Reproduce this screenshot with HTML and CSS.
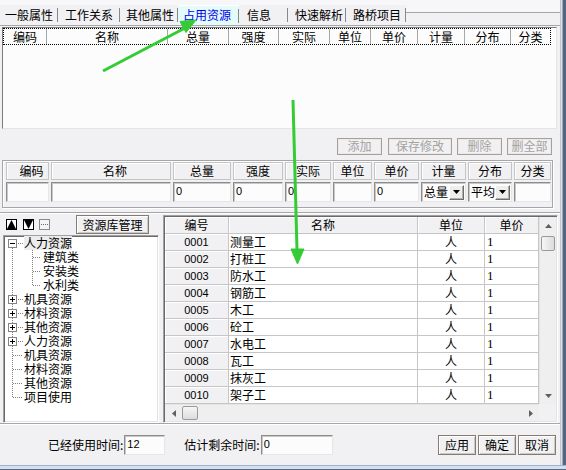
FILE: index.html
```html
<!DOCTYPE html>
<html lang="zh-CN">
<head>
<meta charset="utf-8">
<title>占用资源</title>
<link rel="stylesheet" href="styles.css">
</head>
<body>
<div class="win">
  <div class="main">
    <div class="client">
      <div class="tabs">
        <div class="tab w1">一般属性</div>
        <div class="tab w2">工作关系</div>
        <div class="tab w3">其他属性</div>
        <div class="tab w4 sel">占用资源</div>
        <div class="tab w5">信息</div>
        <div class="tab w6">快速解析</div>
        <div class="tab w7">路桥项目</div>
        <div class="tab-rest"></div>
      </div>
      <div class="page">
        <div class="list">
          <div class="lvh">
            <div class="lh h1">编码</div>
            <div class="lh h2">名称</div>
            <div class="lh h3">总量</div>
            <div class="lh h4">强度</div>
            <div class="lh h5">实际</div>
            <div class="lh h6">单位</div>
            <div class="lh h7">单价</div>
            <div class="lh h8">计量</div>
            <div class="lh h9">分布</div>
            <div class="lh h10">分类</div>
          </div>
        </div>
        <div class="btns">
          <div class="dbtn b45">添加</div>
          <div class="dbtn b64 gap6">保存修改</div>
          <div class="dbtn b45">删除</div>
          <div class="dbtn b45">删全部</div>
        </div>
        <div class="group">
          <div class="frow">
            <div class="fh sh">编码</div>
            <div class="fh sh">名称</div>
            <div class="fh">总量</div>
            <div class="fh">强度</div>
            <div class="fh">实际</div>
            <div class="fh">单位</div>
            <div class="fh">单价</div>
            <div class="fh">计量</div>
            <div class="fh">分布</div>
            <div class="fh">分类</div>
          </div>
          <div class="frow">
            <div class="fi"></div>
            <div class="fi"></div>
            <div class="fi">0</div>
            <div class="fi">0</div>
            <div class="fi">0</div>
            <div class="fi"></div>
            <div class="fi">0</div>
            <div class="fi fd"><span class="fdt">总量</span><span class="ddb"><svg width="7" height="4" viewBox="0 0 7 4"><polygon points="0,0 7,0 3.5,4" fill="#000"/></svg></span></div>
            <div class="fi fd"><span class="fdt">平均</span><span class="ddb"><svg width="7" height="4" viewBox="0 0 7 4"><polygon points="0,0 7,0 3.5,4" fill="#000"/></svg></span></div>
            <div class="fi"></div>
          </div>
        </div>
      </div>
      <div class="lower">
        <div class="left">
          <div class="ltool">
            <svg class="ico i1" width="11" height="11" viewBox="0 0 11 11"><rect x="0.5" y="0.5" width="10" height="10" fill="#fff" stroke="#000"/><polygon points="5.5,1 10,10 1,10" fill="#000"/></svg>
            <svg class="ico i2" width="11" height="11" viewBox="0 0 11 11"><rect x="0.5" y="0.5" width="10" height="10" fill="#fff" stroke="#000"/><polygon points="1,1 10,1 5.5,10" fill="#000"/></svg>
            <svg class="ico i3" width="11" height="11" viewBox="0 0 11 11"><rect x="0.5" y="0.5" width="10" height="10" fill="#f4f4f4" stroke="#8a8a8a"/><line x1="2" y1="5.5" x2="10" y2="5.5" stroke="#6a6a6a" stroke-dasharray="1 1"/></svg>
            <div class="rbtn">资源库管理</div>
          </div>
          <div class="tree">
            <div class="ti t-rootfirst"><svg class="ebox" width="9" height="9" viewBox="0 0 9 9"><rect x="0.5" y="0.5" width="8" height="8" fill="#fff" stroke="#848484"/><line x1="2" y1="4.5" x2="7" y2="4.5" stroke="#000"/></svg><span class="tx hl">人力资源</span></div>
            <div class="ti t-child"><span class="tx">建筑类</span></div>
            <div class="ti t-child"><span class="tx">安装类</span></div>
            <div class="ti t-childlast"><span class="tx">水利类</span></div>
            <div class="ti t-rootbox"><svg class="ebox" width="9" height="9" viewBox="0 0 9 9"><rect x="0.5" y="0.5" width="8" height="8" fill="#fff" stroke="#848484"/><line x1="2" y1="4.5" x2="7" y2="4.5" stroke="#000"/><line x1="4.5" y1="2" x2="4.5" y2="7" stroke="#000"/></svg><span class="tx">机具资源</span></div>
            <div class="ti t-rootbox"><svg class="ebox" width="9" height="9" viewBox="0 0 9 9"><rect x="0.5" y="0.5" width="8" height="8" fill="#fff" stroke="#848484"/><line x1="2" y1="4.5" x2="7" y2="4.5" stroke="#000"/><line x1="4.5" y1="2" x2="4.5" y2="7" stroke="#000"/></svg><span class="tx">材料资源</span></div>
            <div class="ti t-rootbox"><svg class="ebox" width="9" height="9" viewBox="0 0 9 9"><rect x="0.5" y="0.5" width="8" height="8" fill="#fff" stroke="#848484"/><line x1="2" y1="4.5" x2="7" y2="4.5" stroke="#000"/><line x1="4.5" y1="2" x2="4.5" y2="7" stroke="#000"/></svg><span class="tx">其他资源</span></div>
            <div class="ti t-rootbox"><svg class="ebox" width="9" height="9" viewBox="0 0 9 9"><rect x="0.5" y="0.5" width="8" height="8" fill="#fff" stroke="#848484"/><line x1="2" y1="4.5" x2="7" y2="4.5" stroke="#000"/><line x1="4.5" y1="2" x2="4.5" y2="7" stroke="#000"/></svg><span class="tx">人力资源</span></div>
            <div class="ti t-root"><span class="tx">机具资源</span></div>
            <div class="ti t-root"><span class="tx">材料资源</span></div>
            <div class="ti t-root"><span class="tx">其他资源</span></div>
            <div class="ti t-rootlast"><span class="tx">项目使用</span></div>
          </div>
        </div>
        <div class="grid">
          <div class="gmain">
            <div class="gt">
              <div class="gc fx">编号</div><div class="gc fx">名称</div><div class="gc fx">单位</div><div class="gc fx">单价</div>
              <div class="gc fx num">0001</div><div class="gc nm">测量工</div><div class="gc ct">人</div><div class="gc pr">1</div>
              <div class="gc fx num">0002</div><div class="gc nm">打桩工</div><div class="gc ct">人</div><div class="gc pr">1</div>
              <div class="gc fx num">0003</div><div class="gc nm">防水工</div><div class="gc ct">人</div><div class="gc pr">1</div>
              <div class="gc fx num">0004</div><div class="gc nm">钢筋工</div><div class="gc ct">人</div><div class="gc pr">1</div>
              <div class="gc fx num">0005</div><div class="gc nm">木工</div><div class="gc ct">人</div><div class="gc pr">1</div>
              <div class="gc fx num">0006</div><div class="gc nm">砼工</div><div class="gc ct">人</div><div class="gc pr">1</div>
              <div class="gc fx num">0007</div><div class="gc nm">水电工</div><div class="gc ct">人</div><div class="gc pr">1</div>
              <div class="gc fx num">0008</div><div class="gc nm">瓦工</div><div class="gc ct">人</div><div class="gc pr">1</div>
              <div class="gc fx num">0009</div><div class="gc nm">抹灰工</div><div class="gc ct">人</div><div class="gc pr">1</div>
              <div class="gc fx num">0010</div><div class="gc nm">架子工</div><div class="gc ct">人</div><div class="gc pr">1</div>
            </div>
            <div class="vs">
              <div class="sarr"><svg width="7" height="4" viewBox="0 0 7 4"><polygon points="3.5,0 7,4 0,4" fill="#606060"/></svg></div>
              <div class="vtrack"><div class="vthumb"></div></div>
              <div class="sarr"><svg width="7" height="4" viewBox="0 0 7 4"><polygon points="0,0 7,0 3.5,4" fill="#606060"/></svg></div>
            </div>
          </div>
          <div class="hs">
            <div class="htrack">
              <div class="harr"><svg width="4" height="7" viewBox="0 0 4 7"><polygon points="4,0 4,7 0,3.5" fill="#606060"/></svg></div>
              <div class="hthumb"></div>
              <div class="hfill"></div>
              <div class="harr"><svg width="4" height="7" viewBox="0 0 4 7"><polygon points="0,0 0,7 4,3.5" fill="#606060"/></svg></div>
            </div>
            <div class="corner"></div>
          </div>
        </div>
      </div>
      <div class="bottom">
        <span class="lbl">已经使用时间:</span>
        <div class="bi bi1">12</div>
        <span class="lbl lbl2">估计剩余时间:</span>
        <div class="bi bi2">0</div>
        <div class="pbtn first">应用</div>
        <div class="pbtn">确定</div>
        <div class="pbtn">取消</div>
      </div>
    </div>
    <div class="frame-r"></div>
  </div>
  <div class="frame-b"></div>
  <svg class="ov" width="566" height="470" viewBox="0 0 566 470">
    <g fill="#34cc34" stroke="#34cc34">
      <line x1="103" y1="71" x2="185" y2="28" stroke-width="3"/>
      <polygon points="196,20 186,32.5 180,21.5" stroke-width="1"/>
      <line x1="293" y1="100" x2="297" y2="250" stroke-width="3"/>
      <polygon points="291,249 304,249 297.5,264" stroke-width="1"/>
    </g>
  </svg>
</div>
</body>
</html>
```
FILE: styles.css
```css
* { box-sizing: border-box; margin: 0; padding: 0; }
html, body { width: 566px; height: 470px; overflow: hidden; }
body {
  background: #f1f0f2;
  font-family: "Noto Sans CJK SC", "Noto Sans CJK JP", sans-serif;
  font-size: 12px;
  line-height: 14px;
  color: #000;
}
.win { position: relative; width: 566px; height: 470px; display: flex; flex-direction: column; }
.main { display: flex; height: 465px; }
.client {
  width: 561px; height: 465px;
  border-right: 1px solid #c6c6ca;
  display: flex; flex-direction: column;
  background: #f1f0f2;
}
.frame-r { width: 5px; background: linear-gradient(to right, #dde4ee 0 1px, #9aa8bc 1px 2px, #56667f 2px 5px); }
.frame-b { height: 5px; background: linear-gradient(to bottom, #9fb0c8 0 1px, #d3e0ef 1px 4px, #5a6a86 4px 5px); }

/* tabs */
.tabs { height: 25px; display: flex; padding-top: 5px; background: #f7f6f8; }
.tab {
  height: 20px; line-height: 19px; padding-left: 5px; white-space: nowrap;
  background: #f1f0f2 linear-gradient(#888, #888) no-repeat right 3px / 1px 14px;
}
.w1 { width: 58px; }
.w2 { width: 62px; padding-left: 7px; }
.w3 { width: 58px; padding-left: 6px; }
.w4 { width: 61px; }
.w5 { width: 49px; padding-left: 8px; }
.w6 { width: 58px; padding-left: 7px; }
.w7 { width: 60px; padding-left: 7px; }
.tab.sel {
  color: #0000ee;
  background: #e3fbfb linear-gradient(#888, #888) no-repeat right 3px / 1px 14px;
  border-top: 1px solid #fff;
  line-height: 18px;
}
.tab-rest { flex: 1; margin-top: 7px; height: 13px; border-top: 1px solid #a6a6aa; background: #f1f0f2; }

/* page */
.page { height: 187px; border-top: 1px solid #a6a6aa; padding: 1px 0 0 2px; }
.list {
  width: 555px; height: 102px; background: #fcfcfc;
  border-top: 1px solid #7c7c7c; border-left: 1px solid #7c7c7c;
  border-right: 1px solid #e4e4e4; border-bottom: 1px solid #e4e4e4;
}
.lvh { display: flex; width: 548px; height: 17px; border: 1px dotted #000; }
.lh { border-right: 1px solid #a8a8a8; text-align: center; line-height: 15px; white-space: nowrap; }
.lh:last-child { border-right: 0; }
.h1 { width: 43px; } .h2 { width: 121px; } .h3 { width: 61px; } .h4 { width: 50px; } .h5 { width: 51px; }
.h6 { width: 41px; } .h7 { width: 47px; } .h8 { width: 47px; } .h9 { width: 46px; } .h10 { width: 39px; }

.btns { display: flex; justify-content: flex-end; gap: 5px; margin-top: 9px; padding-right: 8px; height: 17px; }
.dbtn {
  height: 17px; border: 1px solid #a89f97; box-shadow: inset 0 0 0 1px #ebe8e6;
  color: #a3a3a3; text-align: center; line-height: 14px; white-space: nowrap;
}
.b45 { width: 45px; }
.b64 { width: 64px; }
.gap6 { margin-left: 1px; }

.group {
  margin-top: 5px; width: 551px; height: 48px;
  border: 1px solid #a6a6aa; box-shadow: inset 1px 1px 0 #fff, 1px 1px 0 #fff;
  padding: 1px 0 0 3px;
}
.frow { display: grid; grid-template-columns: 43px 120px 58px 50px 46px 39px 45px 45px 44px 37px; column-gap: 2px; }
.fh {
  height: 18px; border: 1px solid #c4c4c4; box-shadow: inset 1px 1px 0 #fff;
  text-align: center; line-height: 16px; white-space: nowrap;
}
.fh.sh { padding-left: 8px; }
.fi {
  height: 20px; margin-top: 2px; background: #fcfcfc;
  border: 1px solid; border-color: #8c8c8c #e6e6e6 #e6e6e6 #8c8c8c;
  box-shadow: inset 1px 1px 0 #c8c8c8;
  font-family: "Liberation Sans", Arial, sans-serif; font-size: 11px; line-height: 17px; padding-left: 2px;
}
.fd { display: flex; align-items: center; padding-right: 1px; font-family: "Noto Sans CJK SC", sans-serif; font-size: 12px; }
.fdt { flex: 1; line-height: 16px; white-space: nowrap; }
.ddb {
  width: 15px; height: 15px; display: flex; align-items: center; justify-content: center;
  background: #efeeed; border: 1px solid; border-color: #fff #6e6e6e #6e6e6e #fff;
  box-shadow: inset -1px -1px 0 #b0b0b0;
}

/* lower */
.lower {
  height: 211px; border-top: 1px solid #a6a6aa; box-shadow: inset 0 1px 0 #fff;
  display: flex; padding: 0 2px 0 3px;
}
.left { width: 156px; display: flex; flex-direction: column; }
.ltool { height: 22px; display: flex; align-items: flex-start; padding-top: 2px; }
.ico { display: block; margin-top: 4px; }
.i1 { margin-left: 3px; }
.i2 { margin-left: 6px; }
.i3 { margin-left: 5px; }
.rbtn {
  margin-left: 26px; width: 73px; height: 19px; text-align: center; line-height: 17px;
  border: 1px solid #857b71; box-shadow: inset 1px 1px 0 #fff, inset -1px -1px 0 #cdc9c5;
  background: #f1f0f2; white-space: nowrap;
}
.tree {
  height: 188px; width: 156px; background: #fff;
  border: 1px solid; border-color: #a0a0a0 #fff #fff #a0a0a0;
  box-shadow: inset 1px 1px 0 #6a6a6a, inset -1px -1px 0 #e3e3e3;
  padding-left: 1px;
}
.ti { height: 14px; display: flex; align-items: center; white-space: nowrap; background-repeat: no-repeat; padding-left: 19px; }
.ti .tx { line-height: 14px; height: 14px; }
.ti .hl { background: #ececec; }
.ebox { display: block; margin-left: -16px; margin-right: 7px; }
.t-rootfirst, .t-rootbox { padding-left: 3px; }
.t-rootfirst .ebox, .t-rootbox .ebox { margin-left: 0; }
.t-rootfirst {
  background-image: repeating-linear-gradient(to right, #808080 0 1px, transparent 1px 2px), repeating-linear-gradient(to bottom, #808080 0 1px, transparent 1px 2px);
  background-position: 13px 7px, 7px 12px;
  background-size: 5px 1px, 1px 2px;
}
.t-rootbox {
  background-image: repeating-linear-gradient(to right, #808080 0 1px, transparent 1px 2px), repeating-linear-gradient(to bottom, #808080 0 1px, transparent 1px 2px);
  background-position: 13px 7px, 7px 0;
  background-size: 5px 1px, 1px 14px;
}
.t-root {
  background-image: repeating-linear-gradient(to right, #808080 0 1px, transparent 1px 2px), repeating-linear-gradient(to bottom, #808080 0 1px, transparent 1px 2px);
  background-position: 8px 7px, 7px 0;
  background-size: 10px 1px, 1px 14px;
}
.t-rootlast {
  background-image: repeating-linear-gradient(to right, #808080 0 1px, transparent 1px 2px), repeating-linear-gradient(to bottom, #808080 0 1px, transparent 1px 2px);
  background-position: 8px 7px, 7px 0;
  background-size: 10px 1px, 1px 8px;
}
.t-child, .t-childlast { padding-left: 38px; }
.t-child {
  background-image: repeating-linear-gradient(to right, #808080 0 1px, transparent 1px 2px), repeating-linear-gradient(to bottom, #808080 0 1px, transparent 1px 2px), repeating-linear-gradient(to bottom, #808080 0 1px, transparent 1px 2px);
  background-position: 28px 7px, 27px 0, 7px 0;
  background-size: 8px 1px, 1px 14px, 1px 14px;
}
.t-childlast {
  background-image: repeating-linear-gradient(to right, #808080 0 1px, transparent 1px 2px), repeating-linear-gradient(to bottom, #808080 0 1px, transparent 1px 2px), repeating-linear-gradient(to bottom, #808080 0 1px, transparent 1px 2px);
  background-position: 28px 7px, 27px 0, 7px 0;
  background-size: 8px 1px, 1px 8px, 1px 14px;
}

/* grid */
.grid {
  margin-left: 4px; margin-top: 2px; width: 395px; height: 208px; background: #fff;
  border: 1px solid; border-color: #a0a0a0 #fff #fff #a0a0a0;
  box-shadow: inset 1px 1px 0 #6a6a6a, inset -1px -1px 0 #e3e3e3;
  padding: 1px;
}
.gmain { display: flex; height: 187px; }
.gt { display: grid; grid-template-columns: 64px 189px 67px 54px; grid-auto-rows: 17px; width: 374px; }
.gc {
  border-right: 1px solid #c6c6c6; border-bottom: 1px solid #c6c6c6;
  line-height: 16px; white-space: nowrap; overflow: hidden; background: #fff;
}
.gc.fx { background: #f1f0f2; box-shadow: inset 1px 1px 0 #fff; text-align: center; }
.gc.num { font-family: "Liberation Sans", Arial, sans-serif; font-size: 11px; }
.gc.nm { padding-left: 1px; }
.gc.ct { text-align: center; }
.gc.pr { padding-left: 2px; font-family: "Liberation Serif", serif; font-size: 13px; }
.vs { width: 17px; display: flex; flex-direction: column; background: #efefef; border-left: 1px solid #e4e4e4; }
.sarr { height: 17px; display: flex; align-items: center; justify-content: center; }
.vtrack { flex: 1; padding: 2px 1px 0 1px; }
.vthumb {
  height: 15px; border: 1px solid #9a9a9a; border-radius: 2px;
  background: linear-gradient(to right, #f6f6f6, #dcdcdc);
}
.hs { display: flex; height: 17px; }
.htrack { width: 374px; display: flex; align-items: center; background: #efefef; border-top: 1px solid #e4e4e4; }
.harr { width: 17px; height: 16px; display: flex; align-items: center; justify-content: center; }
.hthumb {
  width: 16px; height: 14px; border: 1px solid #9a9a9a; border-radius: 2px;
  background: linear-gradient(#f6f6f6, #dcdcdc);
}
.hfill { flex: 1; }
.corner { width: 17px; background: #f1f0f2; }

/* bottom */
.bottom {
  height: 42px; border-top: 1px solid #a6a6aa; box-shadow: inset 0 1px 0 #fff;
  display: flex; align-items: center; padding: 0 4px 0 48px;
}
.lbl { white-space: nowrap; line-height: 14px; }
.lbl2 { margin-left: 19px; }
.bi {
  height: 20px; background: #fcfcfc;
  border: 1px solid; border-color: #8c8c8c #e6e6e6 #e6e6e6 #8c8c8c;
  box-shadow: inset 1px 1px 0 #c8c8c8;
  font-family: "Liberation Sans", Arial, sans-serif; font-size: 11px; line-height: 17px; padding-left: 2px;
}
.bi1 { width: 41px; margin-left: 1px; }
.bi2 { width: 72px; margin-left: 1px; }
.pbtn {
  width: 38px; height: 20px; margin-left: 2px; text-align: center; line-height: 18px;
  border: 1px solid #857b71; box-shadow: inset 1px 1px 0 #fff, inset -1px -1px 0 #cdc9c5;
  background: #f1f0f2; white-space: nowrap;
}
.pbtn.first { margin-left: auto; }

.ov { position: absolute; left: 0; top: 0; pointer-events: none; }
```
